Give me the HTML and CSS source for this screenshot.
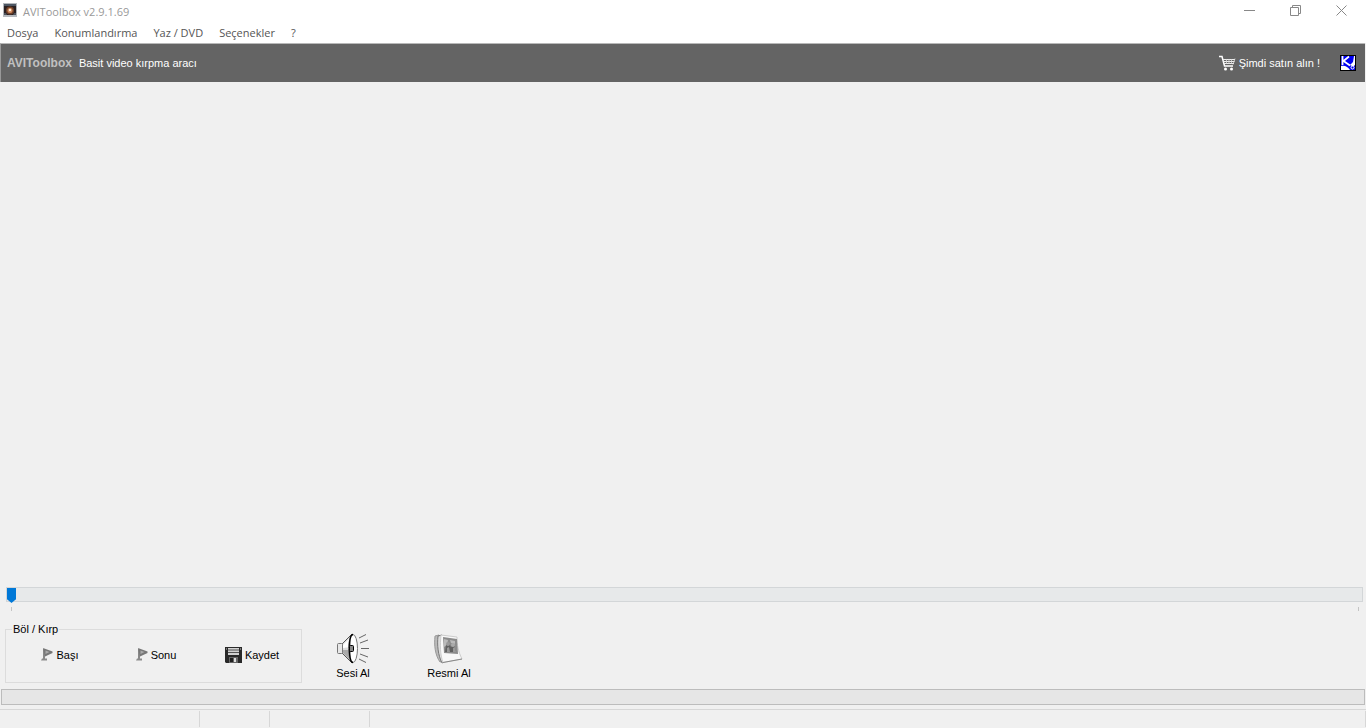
FILE: index.html
```html
<!DOCTYPE html>
<html lang="tr">
<head>
<meta charset="utf-8">
<title>AVIToolbox v2.9.1.69</title>
<link rel="stylesheet" href="styles.css">
</head>
<body>
<header class="titlebar">
  <svg class="app-icon" width="14" height="14" viewBox="0 0 14 14" aria-hidden="true">
    <rect width="14" height="14" fill="#b4b8bd"/><rect x="1" y="1" width="12" height="11" fill="#2a2022"/>
    <rect x="1" y="1" width="12" height="2" fill="#4c5663"/>
    <circle cx="7" cy="7.500" r="4" fill="#704028"/><circle cx="7" cy="7.500" r="2.500" fill="#d08a60"/><circle cx="7" cy="7" r="1.200" fill="#fff0d8"/>
    <path d="M1 10h2l1 2H1zM11 10h2v2h-3z" fill="#50545c"/>
  </svg>
  <h1 class="title">AVIToolbox v2.9.1.69</h1>
  <button class="win-button" aria-label="Simge durumuna küçült"><svg width="11" height="11" viewBox="0 0 11 11"><path d="M0 5.500h11" /></svg></button>
  <button class="win-button" aria-label="Önceki boyut"><svg width="11" height="11" viewBox="0 0 11 11"><path d="M.5 2.500h8v8h-8zM2.500 2.500v-2h8v8h-2"/></svg></button>
  <button class="win-button" aria-label="Kapat"><svg width="11" height="11" viewBox="0 0 11 11"><path d="M.5.5l10 10M10.500.5l-10 10"/></svg></button>
</header>
<nav class="menubar">
  <button>Dosya</button>
  <button>Konumlandırma</button>
  <button>Yaz / DVD</button>
  <button>Seçenekler</button>
  <button>?</button>
</nav>
<div class="banner">
  <strong class="brand">AVIToolbox</strong>
  <span class="tagline">Basit video kırpma aracı</span>
  <button class="buy">
    <svg width="17" height="16" viewBox="0 0 17 16" aria-hidden="true">
      <path d="M0 1.500h3l2.500 9.500H14" fill="none" stroke="#fff" stroke-width="1.500"/>
      <path d="M4 4.500h12M4.500 6.500h11M5 8.500h10" stroke="#eee" stroke-width="1.200"/>
      <path d="M16 3.500l-2 6M7.500 4v5M10 4v5M12.500 4v5" stroke="#ddd" stroke-width=".8"/>
      <circle cx="6.500" cy="14" r="1.500" fill="#fff"/><circle cx="12.500" cy="14" r="1.500" fill="#fff"/>
    </svg>
    <span>Şimdi satın alın !</span>
  </button>
  <button class="vendor" aria-label="Üretici sitesi">
    <svg width="16" height="16" viewBox="0 0 16 16">
      <rect x=".5" y=".5" width="15" height="15" fill="#0000f0" stroke="#000"/>
      <path d="M1 11c4-1 7 1 9 4H1z" fill="#fff"/>
      <path d="M2.500 1v9M9 1.500L3.500 6L10 10.500" fill="none" stroke="#fff" stroke-width="1.800"/>
      <path d="M14 1h1v9c-2 2-3 1-5 0l3-3z" fill="#fff"/>
      <circle cx="12.500" cy="12.500" r="1.500" fill="none" stroke="#fff"/>
    </svg>
  </button>
</div>
<main class="viewer"></main>
<div class="seek">
  <input class="slider" type="range" min="0" max="100" value="0" aria-label="Konum">
  <div class="ticks"><i></i><i></i></div>
</div>
<section class="tools">
  <fieldset class="trim">
    <legend>Böl / Kırp</legend>
    <button>
      <svg width="12" height="14" viewBox="0 0 12 14" aria-hidden="true"><path d="M3 1v11" stroke="#888" stroke-width="2"/><path d="M2 0l9.500 3.500V5L4 8.500z" fill="#777"/><path d="M4.500 2.500l4 1.500-4 2z" fill="#aaa"/><path d="M0 12.500l1-2h5v2z" fill="#8b8b8b"/></svg>
      <span>Başı</span>
    </button>
    <button>
      <svg width="12" height="14" viewBox="0 0 12 14" aria-hidden="true"><path d="M3 1v11" stroke="#888" stroke-width="2"/><path d="M2 0l9.500 3.500V5L4 8.500z" fill="#777"/><path d="M4.500 2.500l4 1.500-4 2z" fill="#aaa"/><path d="M0 12.500l1-2h5v2z" fill="#8b8b8b"/></svg>
      <span>Sonu</span>
    </button>
    <button class="save">
      <svg width="17" height="16" viewBox="0 0 17 16" aria-hidden="true"><path d="M0 0h17v16H1L0 15z" fill="#292929"/><path d="M3 1h11v7H3z" fill="#d2d2d2"/><path d="M3 3h11M3 5.500h11" stroke="#555"/><path d="M4 10h9v6H4z" fill="#666"/><path d="M5 11h3v4H5z" fill="#202020"/><path d="M9 11h2v4H9z" fill="#ddd"/><path d="M1 1h1v2H1zM15 1h1v2h-1z" fill="#777"/></svg>
      <span>Kaydet</span>
    </button>
  </fieldset>
  <button class="grab">
    <svg width="33" height="32" viewBox="0 0 33 32" aria-hidden="true">
      <path d="M5 11L15 1v29L5 20z" fill="#ddd" stroke="#555"/>
      <path d="M6 12l8-8v10l-8 1z" fill="#fff"/><path d="M6 17h8v11l-8-8z" fill="#aaa"/>
      <rect x=".5" y="10.500" width="5" height="10" rx="1" fill="#e7e7e7" stroke="#777"/>
      <ellipse cx="16" cy="15.500" rx="4.500" ry="14" fill="#fff" stroke="#777"/>
      <path d="M16 1.500c-2.500 0-3.500 7-3.500 14s1 14 3.500 14" fill="none" stroke="#000" stroke-width="1.500"/>
      <rect x="12.500" y="12.500" width="4" height="6" rx="1" fill="#888" stroke="#000"/>
      <path d="M22 5l7-3.500M23 10l8-3M24 15.500h8M23 21l8 3M22 26l7 3.500" stroke="#666" stroke-width="1"/>
    </svg>
    <span>Sesi Al</span>
  </button>
  <button class="grab">
    <svg width="30" height="32" viewBox="0 0 30 32" aria-hidden="true">
      <path d="M1 3l4-1c-1 9 1 18 4 26l-3 1C1 22 0 12 1 3z" fill="#bbb" stroke="#999"/>
      <path d="M4 3l4-1c-1 9 1 18 4 26l-4 2C4 22 3 12 4 3z" fill="#ddd" stroke="#777"/>
      <path d="M7 2l16 2c0 8 1 14 5 22L9 29.500C6 21 6 12 7 2z" fill="#f8f8f8" stroke="#ccc"/>
      <path d="M9 29.500L28 26" stroke="#888"/>
      <path d="M9 4l14 2 1 15-14-1z" fill="#8b8b8b"/>
      <path d="M10 6l4 1-1 5-3 2zM16 7l5 1v3l-4-1z" fill="#bababa"/>
      <path d="M11 19l1-7 3-2 2 4 3-3 2 8z" fill="#606060"/><circle cx="14" cy="11" r="2" fill="#999"/><circle cx="19" cy="12" r="2" fill="#aaa"/><path d="M13 15l2-1 1 5h-3zM19 15l2-1 1 5h-3z" fill="#999"/>
    </svg>
    <span>Resmi Al</span>
  </button>
</section>
<div class="progress" role="progressbar" aria-label="İlerleme"></div>
<footer class="statusbar"><span></span><span></span><span></span><span></span></footer>
</body>
</html>
```
FILE: styles.css
```css
* { box-sizing: border-box; }
body {
  display: flex;
  flex-direction: column;
  min-height: 100vh;
  margin: 0;
  background: #f0f0f0;
  color: #000;
  font: 11px/14px "Liberation Sans", Arial, sans-serif;
}
button {
  padding: 0;
  border: 0;
  background: none;
  color: inherit;
  font: inherit;
  white-space: nowrap;
}
svg { display: block; flex: none; }

.titlebar {
  display: flex;
  align-items: flex-start;
  height: 23px;
  padding-left: 3px;
  background: #fff;
}
.app-icon { margin-top: 3px; }
.title {
  flex: 1;
  margin: 3px 0 0 6px;
  color: #999;
  font: 11px/18px "Open Sans", "Noto Sans", sans-serif;
}
.win-button {
  display: grid;
  place-items: center;
  width: 46px;
  height: 21px;
}
.win-button:last-child { margin-right: 2px; }
.win-button path { fill: none; stroke: #888; }

.menubar {
  display: flex;
  gap: 16px;
  height: 20px;
  padding-left: 7px;
  background: #fff;
  color: #555;
  font: 11px/20px "Open Sans", "Noto Sans", sans-serif;
}

.banner {
  display: flex;
  align-items: center;
  height: 39px;
  margin-right: 1px;
  padding: 0 9px 0 6px;
  border-top: 1px solid #b8b8b8;
  border-left: 1px solid #999;
  background: #646464;
  color: #fff;
}
.brand { color: #c0c0c0; font-size: 12px; }
.tagline { margin-left: 7px; }
.buy {
  display: flex;
  align-items: center;
  gap: 3px;
  margin-left: auto;
}
.vendor { margin-left: 20px; }

.viewer { flex: 1; }

.seek { padding: 0 3px 0 6px; }
.slider {
  display: block;
  width: 100%;
  height: 15px;
  margin: 0;
  border: 1px solid #d3d6d8;
  background: #e7e9ea;
  appearance: none;
}
.slider::-webkit-slider-runnable-track { height: 13px; }
.slider::-webkit-slider-thumb {
  width: 9px;
  height: 15px;
  background: #0078d7;
  clip-path: polygon(0 0, 100% 0, 100% 75%, 50% 100%, 0 75%);
  appearance: none;
}
.ticks {
  display: flex;
  justify-content: space-between;
  padding: 5px 4px 0 5px;
}
.ticks i { width: 1px; height: 4px; background: #c4c4c4; }

.tools {
  display: flex;
  align-items: flex-end;
  height: 72px;
  margin-bottom: 6px;
  padding-left: 5px;
}
.trim {
  display: grid;
  grid-template-columns: repeat(3, 96px);
  width: 297px;
  height: 61px;
  margin: 0 3px 0 0;
  padding: 0 1px 8px 6px;
  border: 1px solid #dcdcdc;
}
.trim legend { padding: 0 1px; }
.trim button {
  display: flex;
  align-items: center;
  justify-content: center;
  gap: 3px;
}
.grab {
  display: flex;
  flex-direction: column;
  align-items: center;
  gap: 1px;
  width: 96px;
  padding-bottom: 3px;
}

.progress {
  height: 16px;
  margin: 0 1px;
  border: 1px solid #bcbcbc;
  background: #e6e6e6;
}
.statusbar {
  display: grid;
  grid-template-columns: 200px 70px 100px 1fr;
  height: 19px;
  margin-top: 4px;
  padding: 1px 0;
  border-top: 1px solid #d7d7d7;
}
.statusbar span { border-right: 1px solid #d7d7d7; }
```
